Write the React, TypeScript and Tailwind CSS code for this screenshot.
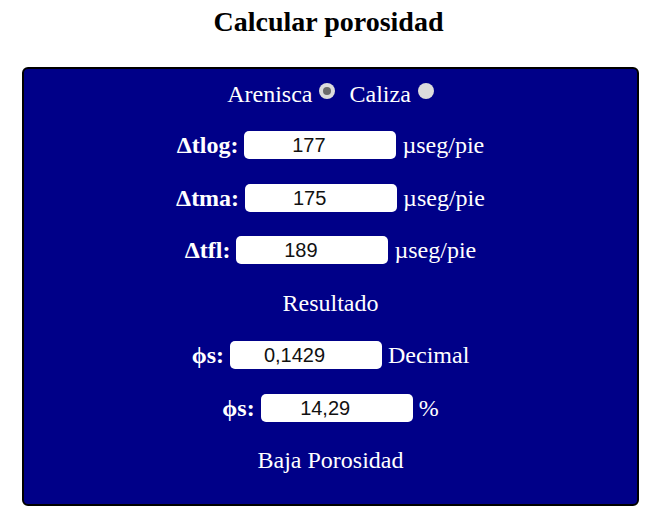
const serif = { fontFamily: '"Liberation Serif", "Times New Roman", serif' };

interface FieldProps {
  label: string;
  value: string;
  unit: string;
}

const Field = ({ label, value, unit }: FieldProps) => {
  return (
    <div className="h-[52.5px] flex items-center justify-center gap-[6px]">
      <span className="font-bold">{label}</span>
      <input
        readOnly
        defaultValue={value}
        className="w-[152px] h-[28px] rounded-[5px] bg-white text-center pr-[23px] text-[20px] text-[#111] outline-none font-['Liberation_Sans',Arial,sans-serif]"
      />
      <span>{unit}</span>
    </div>
  );
};

const Radio = ({ checked }: { checked?: boolean }) => {
  return (
    <span className="inline-flex w-[16px] h-[16px] rounded-full bg-[#dcdcdc] items-center justify-center ml-[7px] -translate-y-[3px]">
      {checked && <span className="w-[8px] h-[8px] rounded-full bg-[#6b6b6b]"></span>}
    </span>
  );
};

export default function App() {
  return (
    <div className="w-[657px] h-[512px] bg-white" style={serif}>
      {/* Title */}
      <div className="h-[44px] flex items-center justify-center">
        <h2 className="text-[28px] font-bold text-black leading-none">Calcular porosidad</h2>
      </div>

      {/* Panel */}
      <div className="ml-[22px] mt-[23px] w-[617px] border-2 border-black rounded-[6px] bg-[#000088] text-white text-[24px] pb-[17px]">
        <div className="h-[50px] flex items-center justify-center">
          <span>Arenisca</span>
          <Radio checked />
          <span className="ml-[14px]">Caliza</span>
          <Radio />
        </div>

        <Field label="Δtlog:" value="177" unit="µseg/pie" />
        <Field label="Δtma:" value="175" unit="µseg/pie" />
        <Field label="Δtfl:" value="189" unit="µseg/pie" />

        <div className="h-[52.5px] flex items-center justify-center">Resultado</div>

        <Field label="ϕs:" value="0,1429" unit="Decimal" />
        <Field label="ϕs:" value="14,29" unit="%" />

        <div className="h-[52.5px] flex items-center justify-center">Baja Porosidad</div>
      </div>
    </div>
  );
}
